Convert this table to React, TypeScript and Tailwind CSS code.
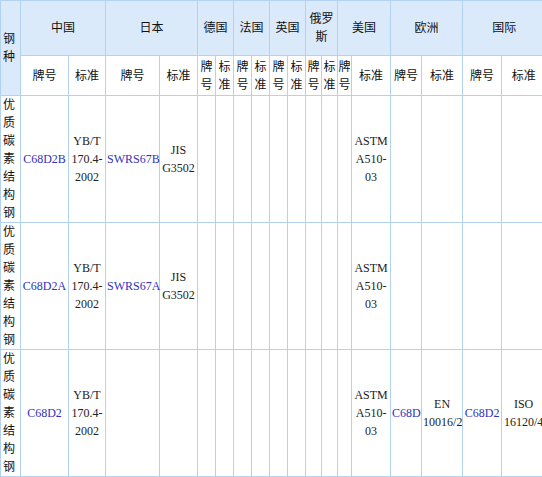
import { Fragment } from "react";

const countries = ["中国", "日本", "德国", "法国", "英国", "俄罗斯", "美国", "欧洲", "国际"];

const colWidths = [
  "w-[20px]",
  "w-[48px]", "w-[37px]",
  "w-[54px]", "w-[38px]",
  "w-[18px]", "w-[18px]",
  "w-[18px]", "w-[18px]",
  "w-[18px]", "w-[18px]",
  "w-[16px]", "w-[16px]",
  "w-[14px]", "w-[39px]",
  "w-[31px]", "w-[41px]",
  "w-[39px]", "w-[44px]",
];

type Cell = { text?: string; link?: boolean };

const rows: Cell[][] = [
  [
    { text: "C68D2B", link: true }, { text: "YB/T 170.4-2002" },
    { text: "SWRS67B", link: true }, { text: "JIS G3502" },
    {}, {}, {}, {}, {}, {}, {}, {},
    {}, { text: "ASTM A510-03" },
    {}, {}, {}, {},
  ],
  [
    { text: "C68D2A", link: true }, { text: "YB/T 170.4-2002" },
    { text: "SWRS67A", link: true }, { text: "JIS G3502" },
    {}, {}, {}, {}, {}, {}, {}, {},
    {}, { text: "ASTM A510-03" },
    {}, {}, {}, {},
  ],
  [
    { text: "C68D2", link: true }, { text: "YB/T 170.4-2002" },
    {}, {},
    {}, {}, {}, {}, {}, {}, {}, {},
    {}, { text: "ASTM A510-03" },
    { text: "C68D", link: true }, { text: "EN 10016/2" },
    { text: "C68D2", link: true }, { text: "ISO 16120/4" },
  ],
];

const cellBase = "border border-[#b3d1f0] p-0 text-center align-middle";

export default function App() {
  return (
    <div className="w-[542px] h-[477px] overflow-hidden bg-white">
      <table className="table-fixed border-collapse w-[546px] text-[12px] leading-[18px] text-[#222] font-['Liberation_Serif','Noto_Sans_CJK_SC',serif]">
        <colgroup>
          {colWidths.map((w, i) => (
            <col key={i} className={w} />
          ))}
        </colgroup>
        <thead>
          <tr className="h-[55px] bg-[#dbeafb]">
            <th rowSpan={2} className={`${cellBase} font-normal text-left pl-[2px] text-[#111]`}>
              钢种
            </th>
            {countries.map((c) => (
              <th key={c} colSpan={2} className={`${cellBase} font-normal text-[#111]`}>
                {c}
              </th>
            ))}
          </tr>
          <tr className="h-[40px]">
            {countries.map((c) => (
              <Fragment key={c}>
                <td className={`${cellBase} text-[#111]`}>牌号</td>
                <td className={`${cellBase} text-[#111]`}>标准</td>
              </Fragment>
            ))}
          </tr>
        </thead>
        <tbody>
          {rows.map((row, r) => (
            <tr key={r} className="h-[126px]">
              <td className={`${cellBase} text-left pl-[2px] text-[#111]`}>优质碳素结构钢</td>
              {row.map((cell, i) => (
                <td key={i} className={`${cellBase} px-[1px]`}>
                  {cell.link ? (
                    <a href="#" className="text-[#3131bd]">{cell.text}</a>
                  ) : (
                    cell.text
                  )}
                </td>
              ))}
            </tr>
          ))}
        </tbody>
      </table>
    </div>
  );
}
